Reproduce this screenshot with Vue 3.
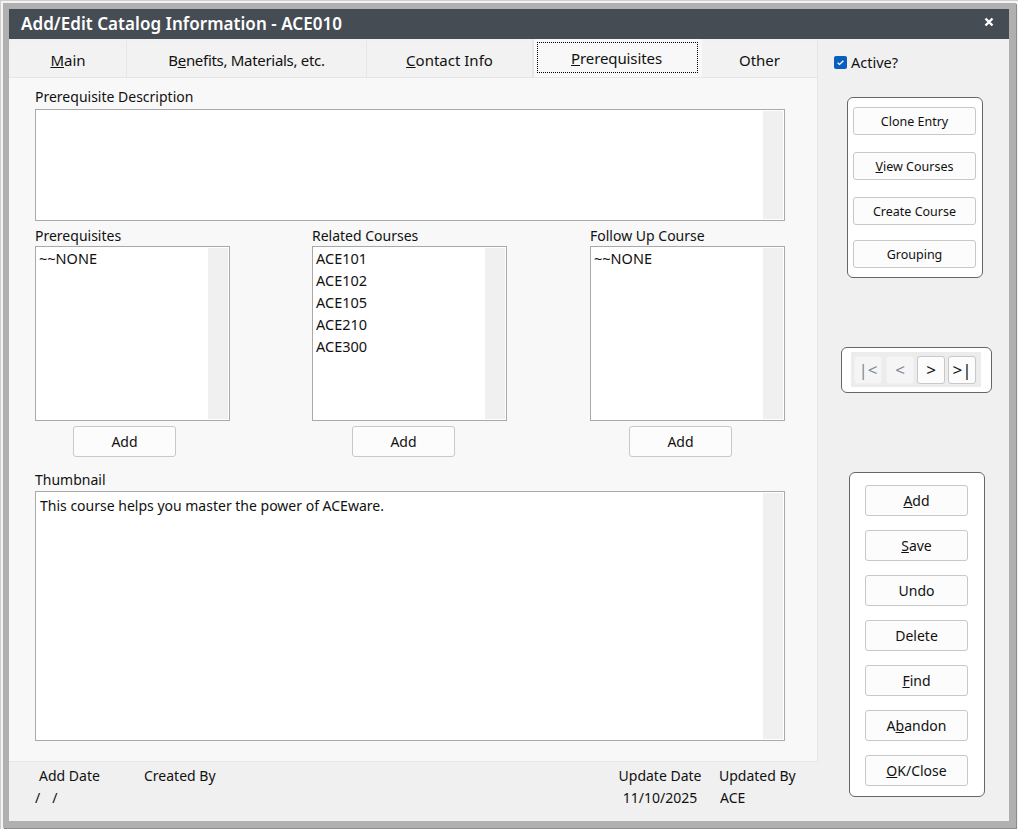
<template>
  <div class="screen">
    <div class="window">
      <div class="titlebar">
        <span class="title">Add/Edit Catalog Information - ACE010</span>
        <svg class="close" width="10" height="10" viewBox="0 0 10 10">
          <path d="M1.5 1.5 L8.5 8.5 M8.5 1.5 L1.5 8.5" stroke="#fff" stroke-width="2.4" />
        </svg>
      </div>

      <div class="body">
        <div class="left">
          <div class="tabs">
            <div
              v-for="tab in tabs"
              :key="tab.pre + tab.key + tab.post"
              class="tab"
              :class="{ active: tab.active, tight: tab.tight }"
              :style="{ width: tab.width + 'px' }"
            >
              <span class="tab-label">{{ tab.pre }}<u>{{ tab.key }}</u>{{ tab.post }}</span>
            </div>
          </div>

          <div class="form">
            <label class="field-label first">Prerequisite Description</label>
            <div class="box desc">
              <div class="scroll"></div>
            </div>

            <div class="lists">
              <div v-for="list in lists" :key="list.title" class="list-col">
                <label class="field-label">{{ list.title }}</label>
                <div class="box list">
                  <div class="rows">
                    <div v-for="row in list.rows" :key="row" class="row">{{ row }}</div>
                  </div>
                  <div class="scroll"></div>
                </div>
                <button class="btn add-btn">Add</button>
              </div>
            </div>

            <label class="field-label thumb-label">Thumbnail</label>
            <div class="box thumb">
              <div class="thumb-text">This course helps you master the power of ACEware.</div>
              <div class="scroll"></div>
            </div>
          </div>

          <div class="footer">
            <div class="foot-col add-date">
              <span class="foot-head">Add Date</span>
              <span class="foot-val slashes">/&nbsp;&nbsp;/</span>
            </div>
            <div class="foot-col created">
              <span class="foot-head">Created By</span>
            </div>
            <div class="foot-col update-date">
              <span class="foot-head">Update Date</span>
              <span class="foot-val">11/10/2025</span>
            </div>
            <div class="foot-col updated">
              <span class="foot-head">Updated By</span>
              <span class="foot-val">ACE</span>
            </div>
          </div>
        </div>

        <div class="side">
          <div class="active-row">
            <span class="checkbox">
              <svg width="13" height="13" viewBox="0 0 13 13">
                <path d="M3.6 6.8 L5.5 8.4 L9.4 4.8" fill="none" stroke="#fff" stroke-width="1.3" />
              </svg>
            </span>
            <span>Active?</span>
          </div>

          <div class="panel tools">
            <button v-for="b in toolButtons" :key="b.pre + b.key + b.post" class="btn small">
              {{ b.pre }}<u>{{ b.key }}</u>{{ b.post }}
            </button>
          </div>

          <div class="panel nav">
            <div class="nav-inner">
              <button
                v-for="n in navButtons"
                :key="n.label"
                class="nav-btn"
                :class="{ off: n.off }"
              >{{ n.label }}</button>
            </div>
          </div>

          <div class="panel actions">
            <button v-for="b in actionButtons" :key="b.pre + b.key + b.post" class="btn">
              {{ b.pre }}<u>{{ b.key }}</u>{{ b.post }}
            </button>
          </div>
        </div>
      </div>
    </div>
  </div>
</template>

<script setup>
const tabs = [
  { pre: '', key: 'M', post: 'ain', width: 117 },
  { pre: 'B', key: 'e', post: 'nefits, Materials, etc.', width: 240, tight: true },
  { pre: '', key: 'C', post: 'ontact Info', width: 166 },
  { pre: '', key: 'P', post: 'rerequisites', width: 169, active: true },
  { pre: 'Other', key: '', post: '', width: 116 }
]

const lists = [
  { title: 'Prerequisites', rows: ['~~NONE'] },
  { title: 'Related Courses', rows: ['ACE101', 'ACE102', 'ACE105', 'ACE210', 'ACE300'] },
  { title: 'Follow Up Course', rows: ['~~NONE'] }
]

const toolButtons = [
  { pre: 'Clone Entry', key: '', post: '' },
  { pre: '', key: 'V', post: 'iew Courses' },
  { pre: 'Create Course', key: '', post: '' },
  { pre: 'Grouping', key: '', post: '' }
]

const navButtons = [
  { label: '|<', off: true },
  { label: '<', off: true },
  { label: '>' },
  { label: '>|' }
]

const actionButtons = [
  { pre: '', key: 'A', post: 'dd' },
  { pre: '', key: 'S', post: 'ave' },
  { pre: 'Undo', key: '', post: '' },
  { pre: 'Delete', key: '', post: '' },
  { pre: '', key: 'F', post: 'ind' },
  { pre: 'A', key: 'b', post: 'andon' },
  { pre: '', key: 'O', post: 'K/Close' }
]
</script>

<style>
html,
body {
  margin: 0;
  background: #fff;
}
</style>

<style scoped>
.screen {
  width: 1018px;
  height: 829px;
  box-sizing: border-box;
  padding: 3px 0 0 3px;
  background: #f4f4f4;
  box-shadow: inset 1px 1px 0 #cfcfcf;
  font-family: "Noto Sans", "Open Sans", sans-serif;
  font-size: 14px;
  color: #111;
  overflow: hidden;
}

.window {
  width: 1013px;
  height: 825px;
  box-sizing: border-box;
  border: 6px solid #b0b0b0;
  border-right-width: 7px;
  border-bottom-width: 7px;
  box-shadow: 1px 1px 0 #8c8c8c;
  background: #f0f0f0;
  display: flex;
  flex-direction: column;
}

.titlebar {
  height: 30px;
  flex: none;
  background: #454c54;
  color: #fff;
  display: flex;
  align-items: center;
  justify-content: space-between;
  padding: 0 15px 0 12px;
}

.title {
  font-size: 17px;
  font-weight: 600;
  letter-spacing: 0.05px;
  padding-bottom: 2px;
}

.close {
  margin-bottom: 4px;
}

.body {
  flex: 1;
  display: flex;
  min-height: 0;
}

.left {
  width: 809px;
  flex: none;
  display: flex;
  flex-direction: column;
}

.tabs {
  display: flex;
  height: 39px;
  flex: none;
  padding: 2px 0 0 1px;
  box-sizing: border-box;
  border-bottom: 1px solid #e6e6e6;
}

.tab {
  box-sizing: border-box;
  flex: none;
  display: flex;
  align-items: center;
  justify-content: center;
  background: #f2f2f2;
  border-right: 1px solid #e6e6e6;
  font-size: 15px;
  padding-top: 2px;
}

.tab.tight {
  letter-spacing: -0.3px;
}

.tab.active {
  background: #f8f8f8;
  height: 38px;
  margin-top: -2px;
  padding: 3px 1px 4px 3px;
  border-right: 0;
  border-left: 1px solid #e6e6e6;
}

.tab.active .tab-label {
  flex: 1;
  align-self: stretch;
  display: flex;
  align-items: center;
  justify-content: center;
  border: 1px dotted #000;
  margin-right: 3px;
  padding-right: 2px;
  letter-spacing: -0.1px;
  white-space: pre;
}

.form {
  height: 684px;
  box-sizing: border-box;
  flex: none;
  background: #f8f8f8;
  padding: 0 0 0 26px;
  border-bottom: 1px solid #e6e6e6;
  border-right: 1px solid #e6e6e6;
}

.field-label {
  display: block;
  height: 18px;
  line-height: 18px;
  font-size: 14px;
}

.first {
  margin-top: 10px;
  margin-bottom: 3px;
}

.box {
  box-sizing: border-box;
  width: 750px;
  background: #fff;
  border: 1px solid #a9a9a9;
  display: flex;
  justify-content: space-between;
}

.scroll {
  width: 20px;
  margin: 1px 1px 1px auto;
  background: #f0f0f0;
  flex: none;
}

.desc {
  height: 112px;
}

.lists {
  display: flex;
  margin-top: 6px;
  width: 750px;
}

.list-col {
  width: 195px;
  display: flex;
  flex-direction: column;
}

.list-col:nth-child(2) {
  margin-left: 82px;
}

.list-col:nth-child(3) {
  margin-left: 83px;
}

.list-col .field-label {
  margin-bottom: 1px;
}

.list {
  width: 195px;
  height: 175px;
}

.rows {
  padding-left: 3px;
  font-size: 14.5px;
}

.row {
  height: 22px;
  line-height: 22px;
}

.btn {
  box-sizing: border-box;
  flex: none;
  width: 103px;
  height: 31px;
  background: #fcfcfc;
  border: 1px solid #c8c8c8;
  border-radius: 3px;
  font-family: inherit;
  font-size: 14px;
  color: #111;
  padding: 0;
}

.add-btn {
  margin: 5px 0 0 38px;
}

.list-col:nth-child(2) .add-btn {
  margin-left: 40px;
}

.list-col:nth-child(3) .add-btn {
  margin-left: 39px;
}

.thumb-label {
  margin-top: 14px;
  margin-bottom: 2px;
}

.thumb {
  height: 250px;
}

.thumb-text {
  padding: 4px 0 0 4px;
  line-height: 20px;
}

.footer {
  flex: 1;
  display: flex;
  padding-top: 3px;
}

.foot-col {
  display: flex;
  flex-direction: column;
  line-height: 22px;
}

.add-date {
  width: 105px;
  padding-left: 30px;
}

.slashes {
  margin-left: -4px;
  letter-spacing: 1.6px;
  white-space: pre;
}

.created {
  width: 473px;
}

.update-date {
  width: 86px;
  margin-right: 16px;
  align-items: center;
}

.updated .foot-val {
  padding-left: 1px;
}

.side {
  flex: 1;
  display: flex;
  flex-direction: column;
  align-items: flex-start;
  padding-left: 16px;
}

.active-row {
  display: flex;
  align-items: center;
  gap: 4px;
  margin-top: 13px;
  height: 20px;
  font-size: 14.5px;
}

.checkbox {
  width: 13px;
  height: 13px;
  border-radius: 2px;
  background: #0a5fbe;
  display: block;
}

.checkbox svg {
  display: block;
}

.panel {
  box-sizing: border-box;
  background: #fff;
  border: 1px solid #666;
  border-radius: 6px;
}

.tools {
  width: 136px;
  height: 181px;
  margin: 25px 0 0 13px;
  padding: 9px 0 0 5px;
  display: flex;
  flex-direction: column;
  align-items: flex-start;
}

.btn.small {
  width: 123px;
  height: 28px;
  font-size: 12.5px;
  margin-bottom: 17px;
}

.btn.small:nth-child(3) {
  margin-bottom: 15px;
}

.btn.small:last-child {
  margin-bottom: 0;
}

.nav {
  width: 151px;
  height: 46px;
  margin: 69px 0 0 7px;
  padding: 4px 9px;
}

.nav-inner {
  width: 130px;
  height: 35px;
  background: #ececec;
  display: flex;
  align-items: center;
  padding-left: 3px;
  box-sizing: border-box;
  gap: 3px;
}

.nav-btn {
  width: 28px;
  height: 28px;
  flex: none;
  box-sizing: border-box;
  border: 1px solid #c8c8c8;
  border-radius: 3px;
  background: #fcfcfc;
  font-family: inherit;
  font-size: 17px;
  color: #111;
  padding: 0;
}

.nav-btn.off {
  background: #f5f5f5;
  border-color: #f0f0f0;
  color: #7f8a96;
}

.nav-btn:nth-child(2) {
  margin-left: 1px;
}

.actions {
  width: 136px;
  height: 325px;
  margin: 79px 0 0 15px;
  padding: 12px 0 0 15px;
  display: flex;
  flex-direction: column;
  align-items: flex-start;
  gap: 14px;
}
</style>
